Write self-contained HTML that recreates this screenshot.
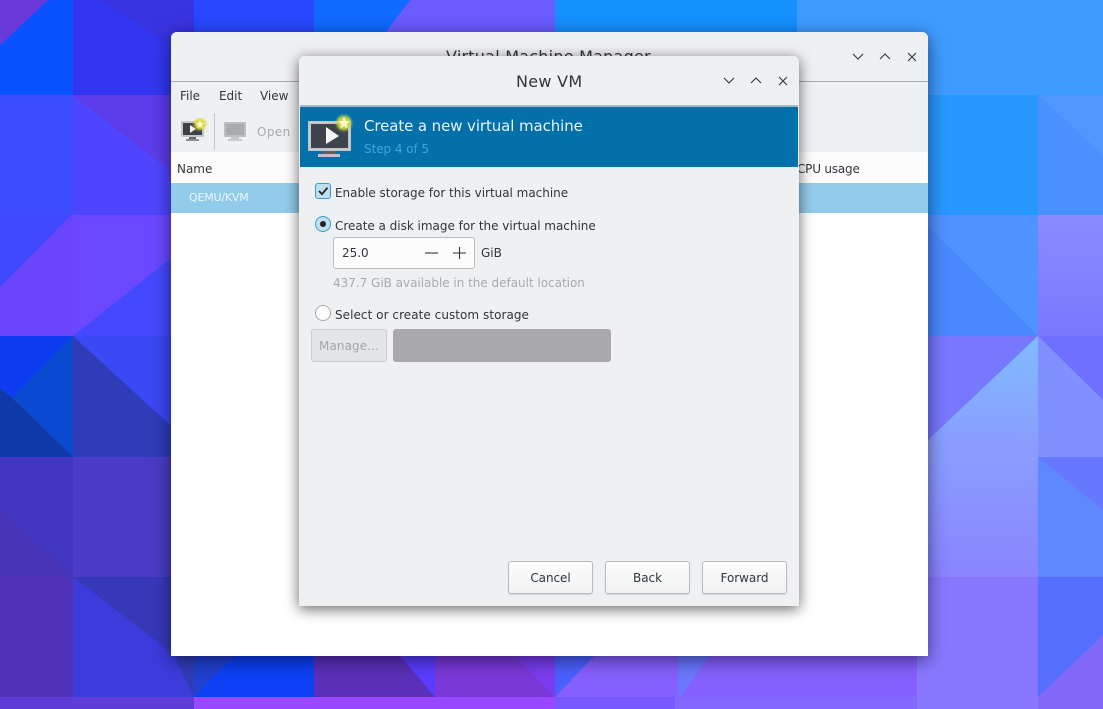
<!DOCTYPE html>
<html><head><meta charset="utf-8">
<style>
html,body{margin:0;padding:0;width:1103px;height:709px;overflow:hidden;background:#3f50f0}
body{position:relative;font-family:"DejaVu Sans","Liberation Sans",sans-serif;color:#31363b}
.a{position:absolute;white-space:nowrap}
.t{font-size:12px;letter-spacing:-.02px;line-height:16px}
#bg{position:absolute;left:0;top:0}
#main{position:absolute;left:171px;top:32px;width:757px;height:624px;background:#fff;border-radius:6px 6px 0 0;box-shadow:0 4px 18px rgba(0,0,20,.55);overflow:hidden}
#dlg{position:absolute;left:299px;top:56px;width:500px;height:550px;background:#eff0f2;border-radius:5px 5px 0 0;box-shadow:0 3px 14px rgba(0,0,0,.6)}
.btn{position:absolute;top:505px;width:83px;height:31px;border:1px solid #b9bcbf;border-radius:3px;background:linear-gradient(#fcfcfc,#f1f2f3);text-align:center;line-height:33px;font-size:12px;letter-spacing:-.05px;box-shadow:0 1px 1px rgba(0,0,0,.12)}
</style></head><body>
<svg id="bg" width="1103" height="709" viewBox="0 0 1103 709">
<defs>
<linearGradient id="g1" x1="0" y1="0" x2="0" y2="1"><stop offset="0" stop-color="#80bcff"/><stop offset="1" stop-color="#8a9aff"/></linearGradient>
<linearGradient id="g2" x1="0" y1="0" x2="0" y2="1"><stop offset="0" stop-color="#8a9cff"/><stop offset="1" stop-color="#8a84ff"/></linearGradient>
<linearGradient id="g3" x1="0" y1="0" x2="0" y2="1"><stop offset="0" stop-color="#8a8cff"/><stop offset="1" stop-color="#7a78ff"/></linearGradient>
<filter id="gl" x="-50%" y="-50%" width="200%" height="200%"><feGaussianBlur stdDeviation="1.2"/></filter>
</defs>
<rect width="1103" height="709" fill="#4a4ae8"/>
<!-- left col A -->
<rect x="0" y="0" width="73" height="95" fill="#0a52ff"/>
<polygon points="0,0 48,0 0,45" fill="#6a38d8"/>
<rect x="0" y="95" width="73" height="120" fill="#3d4cff"/>
<rect x="0" y="215" width="73" height="121" fill="#3f48ff"/>
<polygon points="73,213 73,336 0,336 0,287" fill="#6a45fb"/>
<rect x="0" y="336" width="73" height="121" fill="#0d46d0"/>
<polygon points="0,336 73,336 12,398 0,390" fill="#0e3df0"/>
<polygon points="0,388 12,398 73,440 73,457 0,457" fill="#0f38a8"/>
<polygon points="12,398 73,336 73,457" fill="#0a4ad0"/>
<rect x="0" y="457" width="73" height="120" fill="#4237c0"/>
<polygon points="0,510 73,577 0,577" fill="#4733b6"/>
<rect x="0" y="577" width="73" height="120" fill="#5033b8"/>
<rect x="0" y="697" width="194" height="12" fill="#5f3cd8"/>
<!-- left col B -->
<rect x="73" y="0" width="121" height="95" fill="#3336f0"/>
<polygon points="100,0 194,0 194,60" fill="#3833e0"/>
<rect x="73" y="95" width="121" height="120" fill="#4f45ff"/>
<polygon points="73,95 194,95 194,190" fill="#5c3ce8"/>
<rect x="73" y="215" width="121" height="121" fill="#6a48ff"/>
<polygon points="73,336 171,258 194,240 194,336" fill="#4448ff"/>
<rect x="73" y="336" width="121" height="121" fill="#3a48f5"/>
<polygon points="73,336 170,425 194,440 194,457 73,457" fill="#2f3cb8"/>
<rect x="73" y="457" width="121" height="120" fill="#4a3cc8"/>
<rect x="73" y="577" width="121" height="120" fill="#3c3cdc"/>
<polygon points="73,577 194,577 194,670" fill="#3638b8"/>
<!-- top strip -->
<rect x="194" y="0" width="120" height="40" fill="#2848ff"/>
<rect x="314" y="0" width="100" height="40" fill="#0f6aff"/>
<polygon points="410,0 555,0 555,40 380,40" fill="#6a5cff"/>
<rect x="555" y="0" width="242" height="40" fill="#1590ff"/>
<rect x="797" y="0" width="306" height="95" fill="#3f9cff"/>
<!-- right -->
<rect x="917" y="95" width="121" height="120" fill="#2898ff"/>
<rect x="1038" y="95" width="65" height="120" fill="#4a90ff"/>
<polygon points="1038,95 1103,95 1103,155" fill="#5098ff"/>
<rect x="917" y="215" width="121" height="121" fill="#4a88ff"/>
<polygon points="917,215 1038,215 1038,336" fill="#5092ff"/>
<rect x="1038" y="215" width="65" height="121" fill="url(#g3)"/>
<rect x="917" y="336" width="121" height="121" fill="#7878ff"/>
<polygon points="1038,336 928,440 917,450 917,457 1038,457" fill="url(#g1)"/>
<rect x="1038" y="336" width="65" height="121" fill="#8090ff"/>
<polygon points="1038,336 1103,336 1103,400" fill="#7070ff"/>
<rect x="917" y="457" width="121" height="120" fill="url(#g2)"/>
<rect x="1038" y="457" width="65" height="120" fill="#5f88ff"/>
<polygon points="1038,457 1103,457 1103,510" fill="#6678ff"/>
<rect x="917" y="577" width="121" height="132" fill="#8878ff"/>
<rect x="1038" y="577" width="65" height="120" fill="#5570ff"/>
<polygon points="1038,697 1103,635 1103,709 1038,709" fill="#8268f8"/>
<!-- bottom strip -->
<polygon points="171,650 194,650 194,697" fill="#2f3cb8"/>
<rect x="194" y="650" width="120" height="47" fill="#0d40f5"/>
<polygon points="194,697 194,650 240,650" fill="#2040d0"/>
<rect x="314" y="650" width="121" height="47" fill="#5a30b8"/>
<polygon points="395,650 435,697 435,650" fill="#5a3cff"/>
<rect x="435" y="650" width="120" height="47" fill="#7a38d8"/>
<polygon points="510,650 555,697 555,650" fill="#7a3cf0"/>
<rect x="555" y="650" width="362" height="47" fill="#8660ff"/>
<polygon points="555,650 600,650 555,697" fill="#4a60ff"/>
<polygon points="678,650 714,650 678,700" fill="#6a78ff"/>
<rect x="194" y="697" width="361" height="12" fill="#9a48ff"/>
<rect x="555" y="697" width="120" height="12" fill="#7858ff"/>
<rect x="675" y="697" width="242" height="12" fill="#8268ff"/>
</svg>

<div id="main">
 <div class="a" style="left:0;top:0;width:757px;height:49px;background:#eff0f2;border-bottom:1px solid #a9abae"></div>
 <div class="a" style="left:0;top:50px;width:757px;height:70px;background:#eff0f2"></div>
 <div class="a" style="left:275px;top:14px;font-size:16px;letter-spacing:.23px;line-height:22px">Virtual Machine Manager</div>
 <div class="a t" style="left:9px;top:56px">File</div>
 <div class="a t" style="left:48px;top:56px">Edit</div>
 <div class="a t" style="left:89px;top:56px">View</div>
 <svg class="a" style="left:9px;top:86px" width="28" height="28" viewBox="0 0 28 28">
  <rect x="1" y="3" width="23" height="16" rx="1" fill="#c3c6c8"/><rect x="3" y="5" width="19" height="12" fill="#3c4148"/>
  <polygon points="10,7 10,15 16,11" fill="#f4f4f4"/><rect x="9" y="19" width="7" height="2" fill="#666"/><rect x="6" y="21" width="13" height="2" fill="#8a8c8e"/>
  <circle cx="20" cy="6" r="6" fill="#dcdc40" filter="url(#gl)"/><polygon points="20,2 21.2,5 24,5.2 21.8,7 22.6,10 20,8.4 17.400,10 18.200,7 16,5.2 18.800,5" fill="#fffbd0"/>
 </svg>
 <div class="a" style="left:43px;top:81px;width:1px;height:37px;background:#c4c6c8"></div>
 <svg class="a" style="left:52px;top:88px" width="26" height="24" viewBox="0 0 26 24">
  <rect x="1" y="2" width="22" height="15" rx="1" fill="#bcbfc1"/><rect x="3" y="4" width="18" height="11" fill="#a9acae"/><rect x="8" y="17" width="8" height="2" fill="#c4c6c8"/><rect x="5" y="19" width="14" height="2" fill="#c9cbcd"/>
 </svg>
 <div class="a t" style="left:86px;top:92px;color:#a8aaac;letter-spacing:.4px">Open</div>
 <div class="a" style="left:0;top:120px;width:757px;height:31px;background:#fcfcfc"></div>
 <div class="a t" style="left:6px;top:129px">Name</div>
 <div class="a t" style="left:626px;top:129px;letter-spacing:-.2px">CPU usage</div>
 <div class="a" style="left:0;top:151px;width:757px;height:30px;background:#93cbea"></div>
 <div class="a" style="left:18px;top:158px;font-size:11px;letter-spacing:-.2px;color:#eaf6fc;line-height:16px">QEMU/KVM</div>
 <svg class="a" style="left:675px;top:14px" width="75" height="22" viewBox="0 0 75 22" fill="none" stroke="#31363b" stroke-width="1.1">
  <path d="M7 8l5 5 5-5"/><path d="M34 13l5-5 5 5"/><path d="M62 7l8 8M70 7l-8 8"/>
 </svg>
</div>

<div id="dlg">
 <div class="a" style="left:217px;top:15px;font-size:16px;letter-spacing:.3px;line-height:22px">New VM</div>
 <svg class="a" style="left:420px;top:14px" width="75" height="22" viewBox="0 0 75 22" fill="none" stroke="#31363b" stroke-width="1.1">
  <path d="M5 8l5 5 5-5"/><path d="M32 13l5-5 5 5"/><path d="M60 7l8 8M68 7l-8 8"/>
 </svg>
 <div class="a" style="left:1px;top:49px;width:498px;height:2px;background:#a6b6c2"></div>
 <div class="a" style="left:1px;top:51px;width:498px;height:60px;background:#0470aa"></div>
 <svg class="a" style="left:8px;top:57px" width="50" height="46" viewBox="0 0 50 46">
  <rect x="1" y="8" width="43" height="30" rx="1" fill="#c5c8ca"/><rect x="4" y="11" width="37" height="24" fill="#3f444c"/>
  <polygon points="19,14 19,31 32,23" fill="#f6f6f6"/><rect x="15" y="38" width="14" height="3" fill="#5a6268"/><rect x="11" y="41" width="22" height="3" fill="#c0c4c6"/>
  <circle cx="37" cy="10" r="7.500" fill="#c9d63c" filter="url(#gl)"/><polygon points="37,4 38.700,8 43,8.300 39.800,11 40.800,15.500 37,13 33.200,15.500 34.200,11 31,8.300 35.300,8" fill="#fbf8d0"/>
 </svg>
 <div class="a" style="left:65px;top:60px;font-size:15px;letter-spacing:-.1px;color:#e6f3fa;line-height:20px">Create a new virtual machine</div>
 <div class="a" style="left:65px;top:85px;font-size:12px;letter-spacing:-.05px;color:#3da5dd;line-height:16px">Step 4 of 5</div>

 <div class="a" style="left:16px;top:127px;width:14px;height:14px;background:#bfdff0;border:1px solid #3d9ad0;border-radius:3px"></div>
 <svg class="a" style="left:16px;top:127px" width="16" height="16" viewBox="0 0 16 16" fill="none" stroke="#222" stroke-width="1.8"><path d="M4 8l3 3.2 5.500-6.500"/></svg>
 <div class="a t" style="left:36px;top:129px">Enable storage for this virtual machine</div>

 <div class="a" style="left:16px;top:160px;width:14px;height:14px;border-radius:50%;background:#bfdff0;border:1px solid #3d9ad0"></div>
 <div class="a" style="left:21px;top:165px;width:6px;height:6px;border-radius:50%;background:#222"></div>
 <div class="a t" style="left:36px;top:162px">Create a disk image for the virtual machine</div>

 <div class="a" style="left:34px;top:181px;width:140px;height:30px;background:#fcfcfc;border:1px solid #b9bcbf;border-radius:3px"></div>
 <div class="a t" style="left:43px;top:189px">25.0</div>
 <svg class="a" style="left:124px;top:189px" width="50" height="16" viewBox="0 0 50 16" fill="none" stroke="#31363b" stroke-width="1.1"><path d="M2 8h13"/><path d="M30 8h13M36.500 2v12"/></svg>
 <div class="a t" style="left:182px;top:189px">GiB</div>
 <div class="a t" style="left:34px;top:219px;color:#a8aaad">437.7 GiB available in the default location</div>

 <div class="a" style="left:16px;top:249px;width:14px;height:14px;border-radius:50%;background:#fcfcfc;border:1px solid #a9acaf"></div>
 <div class="a t" style="left:36px;top:251px;letter-spacing:.05px">Select or create custom storage</div>

 <div class="a" style="left:12px;top:273px;width:74px;height:31px;background:#e4e5e7;border:1px solid #ccced0;border-radius:3px;text-align:center;line-height:33px;font-size:12px;letter-spacing:.1px;color:#a3a5a8">Manage...</div>
 <div class="a" style="left:94px;top:273px;width:218px;height:33px;background:#a9a9ab;border-radius:3px"></div>

 <div class="btn" style="left:209px">Cancel</div>
 <div class="btn" style="left:306px">Back</div>
 <div class="btn" style="left:403px">Forward</div>
</div>
</body></html>
